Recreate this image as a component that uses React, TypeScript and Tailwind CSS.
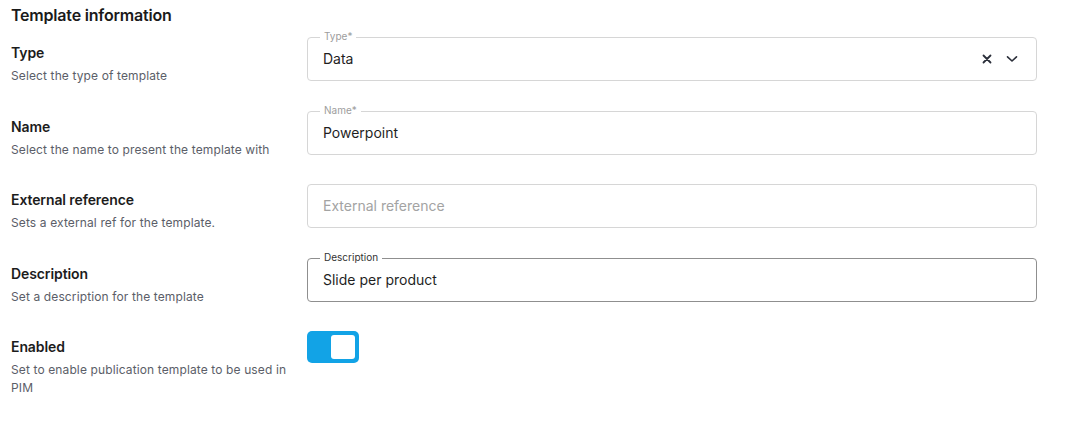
import React from "react";

const font = { fontFamily: "Inter, 'Noto Sans', sans-serif" };

function LeftText({ title, desc }: { title: string; desc: string }) {
  return (
    <div className="pt-[6px]">
      <div className="text-[14px] leading-[20px] font-semibold text-[#1c1c1c] tracking-[-0.1px]">{title}</div>
      <div className="mt-[4px] text-[12px] leading-[18px] text-[#5b5e68] tracking-[0.12px]">{desc}</div>
    </div>
  );
}

function Field({
  label,
  value,
  placeholder,
  active,
  children,
}: {
  label?: string;
  value?: string;
  placeholder?: string;
  active?: boolean;
  children?: React.ReactNode;
}) {
  return (
    <div
      className={
        "relative h-[44px] rounded-[4px] border flex items-center pl-[15px] pr-[18px] pb-[1px] " +
        (active ? "border-[#8f8f8f]" : "border-[#d6d6d6]")
      }
    >
      {label && (
        <span
          className={
            "absolute left-[12px] top-[-8px] bg-white px-[4px] text-[10px] leading-[12px] " +
            (active ? "text-[#333333]" : "text-[#9d9d9d]")
          }
        >
          {label}
        </span>
      )}
      <span
        className={
          "flex-1 text-[14px] leading-[20px] " + (value ? "text-[#1f1f1f]" : "text-[#a3a3a3]")
        }
      >
        {value ?? placeholder}
      </span>
      {children}
    </div>
  );
}

export default function App() {
  return (
    <div className="w-[1070px] h-[430px] bg-white pl-[11px] pt-[3px]" style={font}>
      <div className="text-[16px] leading-[24px] font-semibold text-[#1a1a1a] tracking-[-0.2px]">Template information</div>
      <div className="mt-[10px] grid grid-cols-[284px_730px] gap-x-[12px]">
        <LeftText title="Type" desc="Select the type of template" />
        <div className="mb-[30px]">
          <Field label="Type*" value="Data">
            <div className="flex items-center gap-[14px]">
              <svg width="10" height="10" viewBox="0 0 10 10" className="mt-[1px]">
                <path d="M1.5 1.5 L8.5 8.5 M8.5 1.5 L1.5 8.5" stroke="#2b2f3a" strokeWidth="1.8" strokeLinecap="round" />
              </svg>
              <svg width="12" height="8" viewBox="0 0 12 8">
                <path d="M1.5 1.8 L6 6 L10.5 1.8" stroke="#2b2f3a" strokeWidth="1.6" fill="none" strokeLinecap="round" strokeLinejoin="round" />
              </svg>
            </div>
          </Field>
        </div>

        <LeftText title="Name" desc="Select the name to present the template with" />
        <div className="mb-[29px]">
          <Field label="Name*" value="Powerpoint" />
        </div>

        <LeftText title="External reference" desc="Sets a external ref for the template." />
        <div className="mb-[30px]">
          <Field placeholder="External reference" />
        </div>

        <LeftText title="Description" desc="Set a description for the template" />
        <div className="mb-[29px]">
          <Field label="Description" value="Slide per product" active />
        </div>

        <LeftText title="Enabled" desc="Set to enable publication template to be used in PIM" />
        <div>
          <button className="w-[52px] h-[32px] rounded-[5px] bg-[#12a3e6] flex items-center justify-end pr-[4px]">
            <span className="w-[24px] h-[24px] rounded-[3px] bg-white block" />
          </button>
        </div>
      </div>
    </div>
  );
}
